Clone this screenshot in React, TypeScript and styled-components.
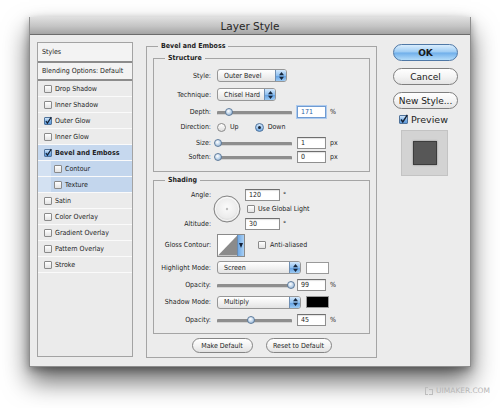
import React from 'react';
import styled, { createGlobalStyle, css } from 'styled-components';

const SMALL = '"DejaVu Sans Condensed", "DejaVu Sans", "Liberation Sans", sans-serif';
const BASE = '"DejaVu Sans", "Liberation Sans", sans-serif';

const GlobalStyle = createGlobalStyle`
  html, body {
    margin: 0;
    padding: 0;
    background: #ffffff;
  }
  body {
    width: 500px;
    height: 408px;
    overflow: hidden;
    font-family: ${SMALL};
    font-size: 7px;
    color: #1e1e1e;
  }
  * {
    box-sizing: border-box;
  }
`;

const Page = styled.div`
  align-items: flex-start;
  display: flex;
  flex-direction: column;
  height: 408px;
  padding: 17px 0 0 29px;
  width: 500px;
`;

const Window = styled.div`
  background: #ececec;
  border: 1px solid #8e8e8e;
  border-top: none;
  box-shadow: 0 14px 24px rgba(0, 0, 0, 0.6), 0 3px 8px rgba(0, 0, 0, 0.3);
  display: flex;
  flex-direction: column;
  height: 350px;
  width: 442px;
`;

const TitleBar = styled.div`
  align-items: center;
  background: linear-gradient(#e0e0e0, #c4c4c4 55%, #a4a4a4);
  border-bottom: 1px solid #6c6c6c;
  color: #262626;
  display: flex;
  flex: none;
  font-family: ${BASE};
  font-size: 10.5px;
  height: 18px;
  justify-content: center;
`;

const Body = styled.div`
  align-items: flex-start;
  display: flex;
  flex: 1;
  padding: 7px 0 0 7px;
`;

/* ---------- left list ---------- */

const StylesPanel = styled.div`
  background: #ebebeb;
  border: 1px solid #a3a3a3;
  display: flex;
  flex: none;
  flex-direction: column;
  height: 315px;
  width: 96px;
`;

const PanelHead = styled.div<{ $h: number }>`
  align-items: center;
  background: #f3f3f3;
  border-bottom: 2px solid #8c8c8c;
  display: flex;
  height: ${p => p.$h}px;
  padding-left: 4px;
`;

const StyleItem = styled.div<{ $selected?: boolean; $indent?: boolean; $strong?: boolean }>`
  align-items: center;
  border-bottom: 1px solid #fafafa;
  display: flex;
  font-weight: ${p => (p.$strong ? 'bold' : 'normal')};
  gap: 3px;
  height: 16px;
  padding-left: ${p => (p.$indent ? 16 : 6)}px;

  ${p => p.$selected && css`
    background: #c6d8ee;
  `}
  ${p => p.$selected && p.$indent && css`
    background: linear-gradient(to right, #d3e1f2 13px, #c3d6ed 13px);
  `}
`;

/* ---------- shared controls ---------- */

const Box = styled.span<{ $on?: boolean; $size?: number }>`
  align-items: center;
  background: linear-gradient(#ffffff, #e2e2e2);
  border: 1px solid #8a8a8a;
  border-radius: 1px;
  display: inline-flex;
  flex: none;
  height: ${p => p.$size ?? 8}px;
  justify-content: center;
  width: ${p => p.$size ?? 8}px;

  ${p => p.$on && css`
    background: linear-gradient(#d2e7fb, #7fb2e6 55%, #5d97d8);
    border-color: #50739b;
  `}

  svg {
    overflow: visible;
  }
`;

const Checkbox: React.FC<{ on?: boolean; size?: number }> = ({ on, size = 8 }) => (
  <Box $on={on} $size={size}>
    {on && (
      <svg width={size - 2} height={size - 2} viewBox="0 0 10 10">
        <path d="M1.5 5 L4 8.5 L10.5 -1.5" fill="none" stroke="#142033" strokeWidth="2" />
      </svg>
    )}
  </Box>
);

const Radio = styled.span<{ $on?: boolean }>`
  align-items: center;
  background: linear-gradient(#ffffff, #dedede);
  border: 1px solid #8a8a8a;
  border-radius: 50%;
  display: inline-flex;
  flex: none;
  height: 9px;
  justify-content: center;
  width: 9px;

  ${p => p.$on && css`
    background: linear-gradient(#d5e9fc, #74abe4);
    border-color: #4f739c;

    &::after {
      background: #1b2635;
      border-radius: 50%;
      content: '';
      height: 3px;
      width: 3px;
    }
  `}
`;

const Group = styled.fieldset`
  border: 1px solid #a5a5a5;
  margin: 0;
  min-width: 0;
  padding: 3px 6px 5px;
`;

const GroupTitle = styled.legend`
  font-weight: bold;
  line-height: 9px;
  margin-left: 5px;
  padding: 0 3px;
`;

const Row = styled.div<{ $h: number }>`
  align-items: center;
  display: flex;
  height: ${p => p.$h}px;
`;

const Label = styled.span`
  flex: none;
  margin-right: 6px;
  text-align: right;
  width: 51px;
  white-space: nowrap;
`;

const SelectBox = styled.div<{ $w: number }>`
  align-items: stretch;
  background: linear-gradient(#ffffff, #f2f2f2 50%, #e3e3e3);
  border: 1px solid #979797;
  border-radius: 3px;
  display: flex;
  flex: none;
  height: 13px;
  overflow: hidden;
  width: ${p => p.$w}px;
`;

const SelectText = styled.span`
  align-items: center;
  display: flex;
  flex: 1;
  padding-left: 6px;
  white-space: nowrap;
`;

const Stepper = styled.span`
  align-items: center;
  background: linear-gradient(#d3e8fc, #8fc0f0 50%, #5f9de0 51%, #9ccaf3);
  border-left: 1px solid #6f8fb3;
  display: flex;
  justify-content: center;
  width: 11px;
`;

const Select: React.FC<{ value: string; width: number }> = ({ value, width }) => (
  <SelectBox $w={width}>
    <SelectText>{value}</SelectText>
    <Stepper>
      <svg width="5" height="8" viewBox="0 0 5 8">
        <path d="M0 3.2 L2.5 0 L5 3.2 Z M0 4.8 L2.5 8 L5 4.8 Z" fill="#16263c" />
      </svg>
    </Stepper>
  </SelectBox>
);

const SliderTrack = styled.div`
  flex: none;
  height: 10px;
  position: relative;
  width: 75px;

  &::before {
    background: #8e8e8e;
    border-bottom: 1px solid #d2d2d2;
    border-radius: 1px;
    content: '';
    height: 3px;
    left: 0;
    position: absolute;
    right: 0;
    top: 4px;
  }
`;

const Thumb = styled.span`
  background: radial-gradient(circle at 40% 35%, #ffffff, #b4cde6 60%, #7e9cbd);
  border: 1px solid #5f7c9c;
  border-radius: 50%;
  height: 8px;
  margin-left: -4px;
  position: absolute;
  top: 1px;
  width: 8px;
`;

const Slider: React.FC<{ value: number }> = ({ value }) => (
  <SliderTrack>
    <Thumb style={{ left: `${value * 100}%` }} />
  </SliderTrack>
);

const Field = styled.span<{ $w?: number; $focus?: boolean }>`
  align-items: center;
  background: #ffffff;
  border: 1px solid #8f8f8f;
  border-top-color: #6f6f6f;
  box-shadow: inset 0 1px 1px rgba(0, 0, 0, 0.12);
  display: flex;
  flex: none;
  height: 12px;
  padding-left: 3px;
  width: ${p => p.$w ?? 29}px;

  ${p => p.$focus && css`
    border-color: #6f9bd2;
    box-shadow: 0 0 0 1px #aecbee;
    color: #2f5ea3;
  `}
`;

const Unit = styled.span`
  margin-left: 4px;
`;

const SliderField = styled.span`
  align-items: center;
  display: flex;
  gap: 5px;
`;

const Swatch = styled.span<{ $color: string }>`
  background: ${p => p.$color};
  border: 1px solid #9a9a9a;
  flex: none;
  height: 12px;
  margin-left: 5px;
  width: 23px;
`;

/* ---------- shading pieces ---------- */

const AngleBlock = styled.div`
  display: grid;
  grid-template-columns: 51px 28px auto;
  grid-template-rows: 15px 14px 15px;
  column-gap: 2px;
  margin-top: 1px;
`;

const AngleLabel = styled.span<{ $row: number }>`
  align-self: center;
  grid-column: 1;
  grid-row: ${p => p.$row};
  text-align: right;
`;

const Dial = styled.div`
  align-self: center;
  grid-column: 2;
  grid-row: 1 / span 3;
  height: 28px;
  width: 28px;
`;

const AngleCell = styled.div<{ $row: number; $shift?: number }>`
  align-items: center;
  display: flex;
  gap: 3px;
  grid-column: 3;
  grid-row: ${p => p.$row};
  padding-left: ${p => p.$shift ?? 2}px;
`;

const ContourPicker = styled.span`
  background: #ffffff;
  border: 1px solid #8a8a8a;
  display: flex;
  flex: none;
  height: 23px;
  width: 28px;
`;

const ContourDrop = styled.span`
  align-items: center;
  background: linear-gradient(to right, #6fa8e4, #a9d0f5);
  border-left: 1px solid #6a8bb0;
  display: flex;
  justify-content: center;
  width: 7px;
`;

const InlineCheck = styled.span<{ $gap?: number }>`
  align-items: center;
  display: flex;
  gap: 4px;
  margin-left: ${p => p.$gap ?? 0}px;
`;

const ButtonRow = styled.div`
  display: flex;
  gap: 13px;
  justify-content: center;
  margin-top: 4px;
`;

const PushButton = styled.button<{ $w: number }>`
  background: linear-gradient(#ffffff, #f3f3f3 50%, #e2e2e2);
  border: 1px solid #858585;
  border-radius: 8px;
  color: #1e1e1e;
  font-family: ${SMALL};
  font-size: 7px;
  height: 15px;
  padding: 0;
  width: ${p => p.$w}px;
`;

/* ---------- right column ---------- */

const Side = styled.div`
  display: flex;
  flex: none;
  flex-direction: column;
  gap: 7px;
  margin-left: 16px;
  padding-top: 2px;
  width: 65px;
`;

const DialogButton = styled.button<{ $primary?: boolean }>`
  background: linear-gradient(#ffffff, #f4f4f4 50%, #e4e4e4);
  border: 1px solid #7f7f7f;
  border-radius: 9px;
  color: #1a1a1a;
  font-family: ${BASE};
  font-size: 9px;
  height: 17px;
  padding: 0;
  width: 65px;

  ${p => p.$primary && css`
    background: linear-gradient(#d9edfd, #9ccbf3 48%, #6eaeea 52%, #b4dcf9);
    border-color: #4f78a6;
    font-weight: bold;
  `}
`;

const PreviewRow = styled.div`
  align-items: center;
  display: flex;
  font-family: ${BASE};
  font-size: 9.5px;
  gap: 3px;
  margin-top: -2px;
  padding-left: 6px;
`;

const PreviewWell = styled.div`
  align-items: center;
  background: #d3d3d3;
  border: 1px solid #c3c3c3;
  display: flex;
  height: 46px;
  justify-content: center;
  margin-left: 8px;
  margin-top: -2px;
  width: 47px;
`;

const PreviewChip = styled.div`
  background: #575757;
  border: 1px solid #3c3c3c;
  box-shadow: 0 0 2px rgba(0, 0, 0, 0.35);
  height: 24px;
  width: 24px;
`;

const Watermark = styled.div`
  align-items: center;
  align-self: flex-end;
  color: #b6b6b6;
  display: flex;
  font-family: ${BASE};
  font-size: 7.5px;
  gap: 3px;
  margin: 19px 10px 0 0;
`;

const styleList = [
  { name: 'Drop Shadow' },
  { name: 'Inner Shadow' },
  { name: 'Outer Glow', on: true },
  { name: 'Inner Glow' },
  { name: 'Bevel and Emboss', on: true, selected: true },
  { name: 'Contour', selected: true, indent: true },
  { name: 'Texture', selected: true, indent: true },
  { name: 'Satin' },
  { name: 'Color Overlay' },
  { name: 'Gradient Overlay' },
  { name: 'Pattern Overlay' },
  { name: 'Stroke' }
];

const App: React.FC = () => (
  <>
    <GlobalStyle />
    <Page>
      <Window>
        <TitleBar>Layer Style</TitleBar>
        <Body>
          <StylesPanel>
            <PanelHead $h={20}>Styles</PanelHead>
            <PanelHead $h={18}>Blending Options: Default</PanelHead>
            {styleList.map(item => (
              <StyleItem
                key={item.name}
                $selected={item.selected}
                $indent={item.indent}
                $strong={item.on && item.selected}
              >
                <Checkbox on={item.on} size={8} />
                <span>{item.name}</span>
              </StyleItem>
            ))}
          </StylesPanel>

          <Group style={{ marginLeft: 13, width: 231, height: 316 }}>
            <GroupTitle>Bevel and Emboss</GroupTitle>

            <Group style={{ padding: '3px 6px 7px' }}>
              <GroupTitle>Structure</GroupTitle>
              <Row $h={19}>
                <Label>Style:</Label>
                <Select value="Outer Bevel" width={70} />
              </Row>
              <Row $h={19}>
                <Label>Technique:</Label>
                <Select value="Chisel Hard" width={59} />
              </Row>
              <Row $h={15}>
                <Label>Depth:</Label>
                <SliderField>
                  <Slider value={0.16} />
                  <Field $focus>171</Field>
                </SliderField>
                <Unit>%</Unit>
              </Row>
              <Row $h={16}>
                <Label>Direction:</Label>
                <InlineCheck>
                  <Radio />
                  <span>Up</span>
                </InlineCheck>
                <InlineCheck $gap={16}>
                  <Radio $on />
                  <span>Down</span>
                </InlineCheck>
              </Row>
              <Row $h={15}>
                <Label>Size:</Label>
                <SliderField>
                  <Slider value={0.01} />
                  <Field>1</Field>
                </SliderField>
                <Unit>px</Unit>
              </Row>
              <Row $h={14}>
                <Label>Soften:</Label>
                <SliderField>
                  <Slider value={0.01} />
                  <Field>0</Field>
                </SliderField>
                <Unit>px</Unit>
              </Row>
            </Group>

            <Group style={{ marginTop: 4, padding: '1px 6px 5px' }}>
              <GroupTitle>Shading</GroupTitle>
              <AngleBlock>
                <AngleLabel $row={1}>Angle:</AngleLabel>
                <Dial>
                  <svg width="28" height="28" viewBox="0 0 28 28">
                    <defs>
                      <radialGradient id="dialFill" cx="50%" cy="45%" r="60%">
                        <stop offset="0" stopColor="#fbfbfb" />
                        <stop offset="0.65" stopColor="#ececec" />
                        <stop offset="1" stopColor="#c4c4c4" />
                      </radialGradient>
                    </defs>
                    <circle cx="14" cy="14" r="13" fill="url(#dialFill)" stroke="#858585" />
                    <circle cx="14" cy="14" r="11.5" fill="none" stroke="#ffffff" strokeOpacity="0.8" />
                    <circle cx="14" cy="14" r="1.2" fill="#bdbdbd" />
                  </svg>
                </Dial>
                <AngleCell $row={1}>
                  <Field $w={35}>120</Field>
                  <span>°</span>
                </AngleCell>
                <AngleCell $row={2} $shift={4}>
                  <Checkbox size={8} />
                  <span>Use Global Light</span>
                </AngleCell>
                <AngleLabel $row={3}>Altitude:</AngleLabel>
                <AngleCell $row={3}>
                  <Field $w={35}>30</Field>
                  <span>°</span>
                </AngleCell>
              </AngleBlock>

              <Row $h={28}>
                <Label>Gloss Contour:</Label>
                <ContourPicker>
                  <svg width="20" height="21" viewBox="0 0 20 21">
                    <rect width="20" height="21" fill="#ffffff" />
                    <polygon points="0,21 20,0 20,21" fill="#8b8b8b" />
                  </svg>
                  <ContourDrop>
                    <svg width="4" height="5" viewBox="0 0 4 5">
                      <path d="M0 0 L4 0 L2 5 Z" fill="#122036" />
                    </svg>
                  </ContourDrop>
                </ContourPicker>
                <InlineCheck $gap={13}>
                  <Checkbox size={8} />
                  <span>Anti-aliased</span>
                </InlineCheck>
              </Row>
              <Row $h={17}>
                <Label>Highlight Mode:</Label>
                <Select value="Screen" width={84} />
                <Swatch $color="#ffffff" />
              </Row>
              <Row $h={17}>
                <Label>Opacity:</Label>
                <SliderField>
                  <Slider value={0.98} />
                  <Field>99</Field>
                </SliderField>
                <Unit>%</Unit>
              </Row>
              <Row $h={18}>
                <Label>Shadow Mode:</Label>
                <Select value="Multiply" width={84} />
                <Swatch $color="#000000" />
              </Row>
              <Row $h={17}>
                <Label>Opacity:</Label>
                <SliderField>
                  <Slider value={0.45} />
                  <Field>45</Field>
                </SliderField>
                <Unit>%</Unit>
              </Row>
            </Group>

            <ButtonRow>
              <PushButton $w={61}>Make Default</PushButton>
              <PushButton $w={66}>Reset to Default</PushButton>
            </ButtonRow>
          </Group>

          <Side>
            <DialogButton $primary>OK</DialogButton>
            <DialogButton>Cancel</DialogButton>
            <DialogButton>New Style...</DialogButton>
            <PreviewRow>
              <Checkbox on size={9} />
              <span>Preview</span>
            </PreviewRow>
            <PreviewWell>
              <PreviewChip />
            </PreviewWell>
          </Side>
        </Body>
      </Window>
      <Watermark>
        <svg width="8" height="8" viewBox="0 0 8 8">
          <path d="M0 0 H3 V1 H1 V7 H3 V8 H0 Z M4 2 H8 V8 H4 V7 H7 V3 H4 Z" fill="#bdbdbd" />
        </svg>
        <span>UIMAKER.COM</span>
      </Watermark>
    </Page>
  </>
);

export default App;
